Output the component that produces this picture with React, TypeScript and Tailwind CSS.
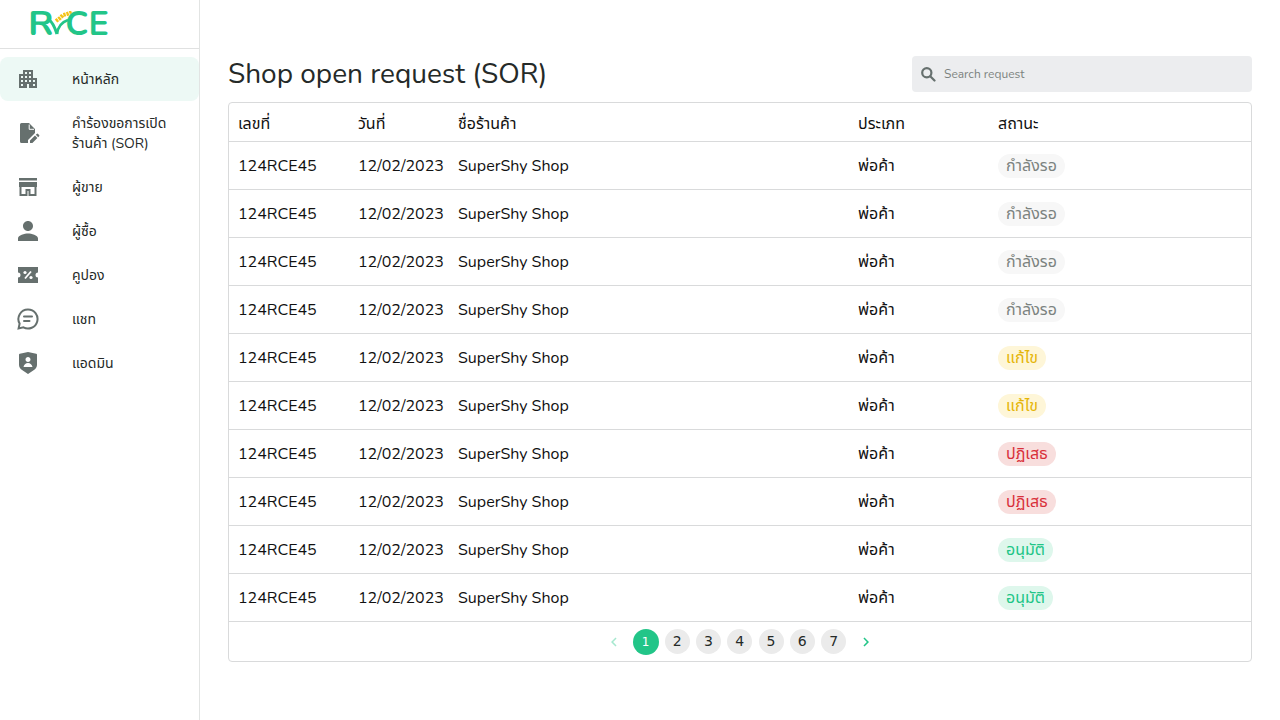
import { MdApartment, MdPerson, MdChevronLeft, MdChevronRight } from 'react-icons/md';
import { RiShieldUserFill } from 'react-icons/ri';

const rows = [
  { label: 'กำลังรอ', badge: 'bg-[#f7f7f7] text-[#7c8380]' },
  { label: 'กำลังรอ', badge: 'bg-[#f7f7f7] text-[#7c8380]' },
  { label: 'กำลังรอ', badge: 'bg-[#f7f7f7] text-[#7c8380]' },
  { label: 'กำลังรอ', badge: 'bg-[#f7f7f7] text-[#7c8380]' },
  { label: 'แก้ไข', badge: 'bg-[#fef6d8] text-[#e5b507]' },
  { label: 'แก้ไข', badge: 'bg-[#fef6d8] text-[#e5b507]' },
  { label: 'ปฏิเสธ', badge: 'bg-[#f8dedd] text-[#d8303a]' },
  { label: 'ปฏิเสธ', badge: 'bg-[#f8dedd] text-[#d8303a]' },
  { label: 'อนุมัติ', badge: 'bg-[#def7ec] text-[#21c587]' },
  { label: 'อนุมัติ', badge: 'bg-[#def7ec] text-[#21c587]' },
];

function FileEditIcon() {
  return (
    <svg viewBox="0 0 24 24" className="size-6 fill-[#66706e]">
      <path d="M5.5 2H13l6 6v4l-7 7v3H5.5A1.5 1.5 0 0 1 4 20.5v-17A1.5 1.5 0 0 1 5.5 2z" />
      <path d="M13.2 3.5v4.8H18" fill="none" stroke="#fff" strokeWidth="1" />
      <path d="M14 19.6V22h2.4l5-5-2.4-2.4zM19.8 13.8l2.4 2.4 .9-.9a1 1 0 0 0 0-1.4l-1-1a1 1 0 0 0-1.4 0z" />
    </svg>
  );
}

function StoreIcon() {
  return (
    <svg viewBox="0 0 24 24" className="size-6 fill-[#66706e]">
      <path d="M3 3h18v2.5H3z" />
      <path d="M3 7h18v5H3z" />
      <path d="M4.5 12v8h6v-5h3v5h6v-8" fill="none" stroke="#66706e" strokeWidth="2" />
    </svg>
  );
}

function CouponIcon() {
  return (
    <svg viewBox="0 0 24 24" className="size-6 fill-[#66706e]">
      <path d="M2 4h20v5.5a2.5 2.5 0 0 0 0 5V20H2v-5.5a2.5 2.5 0 0 0 0-5z" />
      <path d="M9 15.5l6-7" stroke="#fff" strokeWidth="1.8" />
      <circle cx="9" cy="9.5" r="1.6" fill="#fff" />
      <circle cx="15" cy="14.5" r="1.6" fill="#fff" />
    </svg>
  );
}

function ChatIcon() {
  return (
    <svg viewBox="0 0 24 24" className="size-6 fill-none stroke-[#66706e]" strokeWidth="2">
      <path d="M12 2.5a9.5 9.5 0 1 1-4.6 17.8L2.6 21.5l1-4.9A9.5 9.5 0 0 1 12 2.5z" />
      <path d="M8 9.5h8M8 14h5.5" strokeLinecap="round" />
    </svg>
  );
}

function SearchIcon() {
  return (
    <svg viewBox="0 0 16 16" className="size-4 fill-none stroke-[#66706e]" strokeWidth="2.2">
      <circle cx="6.8" cy="6.8" r="4.6" />
      <path d="M10.2 10.2l4.3 4.3" strokeLinecap="round" />
    </svg>
  );
}

function Logo() {
  return (
    <div className="flex items-center h-[48px] pl-[28px] pb-[1px] font-bold text-[#22c588] text-[34px] leading-none">
      <span className="inline-block origin-left scale-x-110">R</span>
      <svg viewBox="0 0 26 26" className="w-[26px] h-[26px] -ml-[3px] -mr-[9px] shrink-0">
        <path d="M1 9c4 2 6 8 8 14" fill="none" stroke="#22c588" strokeWidth="3" />
        <path d="M9 23C10 15 14 11 20 9" fill="none" stroke="#22c588" strokeWidth="2.6" />
        <path d="M8 10l4-3 3-3 4-1 5-2" fill="none" stroke="#f3c316" strokeWidth="4" strokeDasharray="2.4 0.8" />
      </svg>
      <span>CE</span>
    </div>
  );
}

function NavItem({ icon, active, children }: { icon: React.ReactNode; active?: boolean; children: React.ReactNode }) {
  return (
    <div className={`flex items-center pl-[16px] pr-[20px] text-[14px] leading-[20px] text-[#252a28] rounded-lg ${active ? 'bg-[#edf9f5]' : ''}`}>
      <div className="w-[24px] shrink-0 flex justify-center text-[#66706e]">{icon}</div>
      <div className="ml-[32px] pt-[13px] pb-[11px]">{children}</div>
    </div>
  );
}

const grid = 'grid grid-cols-[120px_100px_400px_140px_1fr] items-center pl-[9px]';

export default function App() {
  return (
    <div className="flex h-[720px] w-[1280px] bg-white font-['Nunito','Noto_Sans','Noto_Sans_Thai',sans-serif]">
      <aside className="w-[200px] shrink-0 border-r border-[#e2e4e3]">
        <div className="border-b border-[#e0e1e1] h-[49px]">
          <Logo />
        </div>
        <nav className="pt-[8px] flex flex-col">
          <NavItem active icon={<MdApartment size={24} />}>หน้าหลัก</NavItem>
          <NavItem icon={<FileEditIcon />}><div className="w-[110px]">คำร้องขอการเปิดร้านค้า (SOR)</div></NavItem>
          <NavItem icon={<StoreIcon />}>ผู้ขาย</NavItem>
          <NavItem icon={<MdPerson size={30} className="shrink-0" />}>ผู้ซื้อ</NavItem>
          <NavItem icon={<CouponIcon />}>คูปอง</NavItem>
          <NavItem icon={<ChatIcon />}>แชท</NavItem>
          <NavItem icon={<RiShieldUserFill size={24} />}>แอดมิน</NavItem>
        </nav>
      </aside>
      <main className="flex-1 px-[28px] pt-[56px]">
        <div className="flex items-center justify-between h-[36px] mb-[10px]">
          <h1 className="text-[28px] leading-[36px] text-[#252a28]">Shop open request (SOR)</h1>
          <div className="w-[340px] h-[36px] bg-[#ecedef] rounded flex items-center pl-[8px] gap-[8px] text-[12px] text-[#7c8380]">
            <SearchIcon />
            <span>Search request</span>
          </div>
        </div>
        <div className="border border-[#d9dadb] rounded h-[560px] flex flex-col text-[16px] text-[#111]">
          <div className={`${grid} h-[39px] pt-[3px] border-b border-[#d9dadb]`}>
            <div>เลขที่</div>
            <div>วันที่</div>
            <div>ชื่อร้านค้า</div>
            <div>ประเภท</div>
            <div>สถานะ</div>
          </div>
          {rows.map((r, i) => (
            <div key={i} className={`${grid} h-[48px] border-b border-[#d9dadb]`}>
              <div>124RCE45</div>
              <div>12/02/2023</div>
              <div>SuperShy Shop</div>
              <div>พ่อค้า</div>
              <div>
                <span className={`inline-block rounded-full px-[8px] h-[24px] leading-[24px] ${r.badge}`}>{r.label}</span>
              </div>
            </div>
          ))}
          <div className="flex-1 flex items-center justify-center text-[14px] text-[#252a28] font-['DejaVu_Sans',sans-serif]">
            <MdChevronLeft size={18} className="text-[#a6e8cf] mr-[10px]" />
            <div className="size-[26px] rounded-full bg-[#22c588] text-white text-[12px] flex items-center justify-center mr-[6px]">1</div>
            {[2, 3, 4, 5, 6, 7].map((n) => (
              <div key={n} className="size-[25px] rounded-full bg-[#ebebeb] flex items-center justify-center mr-[6.3px]">{n}</div>
            ))}
            <MdChevronRight size={18} className="text-[#22c588] ml-[5px]" />
          </div>
        </div>
      </main>
    </div>
  );
}
